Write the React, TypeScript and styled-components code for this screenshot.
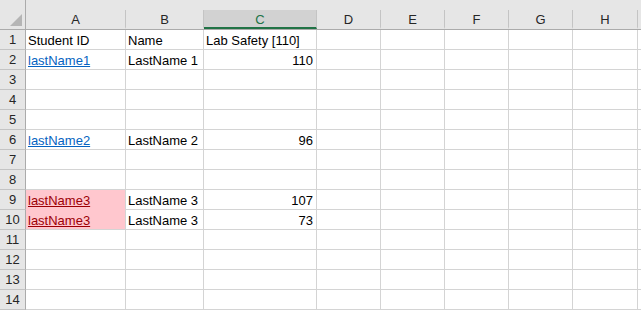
import React from 'react';
import styled, { createGlobalStyle } from 'styled-components';

const GlobalStyle = createGlobalStyle`
  html, body {
    margin: 0;
    padding: 0;
    background: #ffffff;
  }
  body {
    font-family: "Liberation Sans", Arial, sans-serif;
    width: 641px;
    height: 310px;
    overflow: hidden;
  }
`;

const COLS = ['A', 'B', 'C', 'D', 'E', 'F', 'G', 'H'];
const WIDTHS = [100, 78, 113, 64, 64, 64, 64, 65];

const Sheet = styled.div`
  display: grid;
  grid-template-columns: 26px ${WIDTHS.map((w) => `${w}px`).join(' ')} 1fr;
  grid-template-rows: 30px repeat(14, 20px);
  width: 641px;
`;

const Corner = styled.div`
  position: relative;
  background: #e6e6e6;
  border-bottom: 1px solid #ababab;
  border-right: 1px solid #ababab;
  box-sizing: border-box;
`;

const CornerTriangle = styled.div`
  position: absolute;
  right: 3px;
  bottom: 3px;
  width: 0;
  height: 0;
  border-left: 12px solid transparent;
  border-bottom: 12px solid #b5b5b5;
`;

const ColHeader = styled.div<{ $selected?: boolean; $last?: boolean }>`
  display: flex;
  flex-direction: column;
  background: #e6e6e6;
  box-sizing: border-box;
  border-bottom: 1px solid #ababab;
`;

const ColTop = styled.div`
  height: 10px;
`;

const ColLabel = styled.div<{ $selected?: boolean; $last?: boolean }>`
  flex: 1;
  display: flex;
  align-items: center;
  justify-content: center;
  box-sizing: border-box;
  font-size: 13px;
  color: ${(p) => (p.$selected ? '#217346' : '#262626')};
  background: ${(p) => (p.$selected ? '#d2d2d2' : 'transparent')};
  border-right: ${(p) => (p.$last ? 'none' : '1px solid #c4c4c4')};
  border-bottom: ${(p) => (p.$selected ? '2px solid #217346' : '2px solid transparent')};
  padding-top: 1px;
`;

const RowHeader = styled.div`
  display: flex;
  align-items: center;
  justify-content: center;
  background: #e6e6e6;
  box-sizing: border-box;
  border-right: 1px solid #ababab;
  border-bottom: 1px solid #c4c4c4;
  font-size: 13px;
  color: #262626;
`;

const Cell = styled.div<{ $align?: 'left' | 'right'; $bad?: boolean; $badBelow?: boolean }>`
  display: flex;
  align-items: center;
  justify-content: ${(p) => (p.$align === 'right' ? 'flex-end' : 'flex-start')};
  box-sizing: border-box;
  padding: 1px 3px 0 2px;
  border-right: 1px solid #d4d4d4;
  border-bottom: 1px solid ${(p) => (p.$badBelow ? '#ffc7ce' : '#d4d4d4')};
  background: ${(p) => (p.$bad ? '#ffc7ce' : '#ffffff')};
  font-size: 13px;
  color: ${(p) => (p.$bad ? '#9c0006' : '#000000')};
  white-space: nowrap;
  overflow: visible;
`;

const Filler = styled.div`
  box-sizing: border-box;
  border-bottom: 1px solid #d4d4d4;
`;

const HeaderFiller = styled.div`
  background: #e6e6e6;
  box-sizing: border-box;
  border-bottom: 1px solid #ababab;
`;

const Link = styled.span<{ $bad?: boolean }>`
  color: ${(p) => (p.$bad ? '#9c0006' : '#0563c1')};
  text-decoration: underline;
`;

type CellData = { text: string; link?: boolean; right?: boolean };

const data: Record<number, CellData[]> = {
  1: [{ text: 'Student ID' }, { text: 'Name' }, { text: 'Lab Safety [110]' }],
  2: [{ text: 'lastName1', link: true }, { text: 'LastName 1' }, { text: '110', right: true }],
  6: [{ text: 'lastName2', link: true }, { text: 'LastName 2' }, { text: '96', right: true }],
  9: [{ text: 'lastName3', link: true }, { text: 'LastName 3' }, { text: '107', right: true }],
  10: [{ text: 'lastName3', link: true }, { text: 'LastName 3' }, { text: '73', right: true }],
};

const badRows = [9, 10];

export default function App() {
  const rows = Array.from({ length: 14 }, (_, i) => i + 1);
  return (
    <>
      <GlobalStyle />
      <Sheet>
        <Corner>
          <CornerTriangle />
        </Corner>
        {COLS.map((c, i) => (
          <ColHeader key={c}>
            <ColTop />
            <ColLabel $selected={c === 'C'} $last={false}>
              {c}
            </ColLabel>
          </ColHeader>
        ))}
        <HeaderFiller />
        {rows.map((r) => (
          <React.Fragment key={r}>
            <RowHeader>{r}</RowHeader>
            {COLS.map((c, ci) => {
              const cell = data[r]?.[ci];
              const bad = ci === 0 && badRows.includes(r);
              const badBelow = bad && badRows.includes(r + 1);
              return (
                <Cell key={c} $align={cell?.right ? 'right' : 'left'} $bad={bad} $badBelow={badBelow}>
                  {cell && (cell.link ? <Link $bad={bad}>{cell.text}</Link> : cell.text)}
                </Cell>
              );
            })}
            <Filler />
          </React.Fragment>
        ))}
      </Sheet>
    </>
  );
}
